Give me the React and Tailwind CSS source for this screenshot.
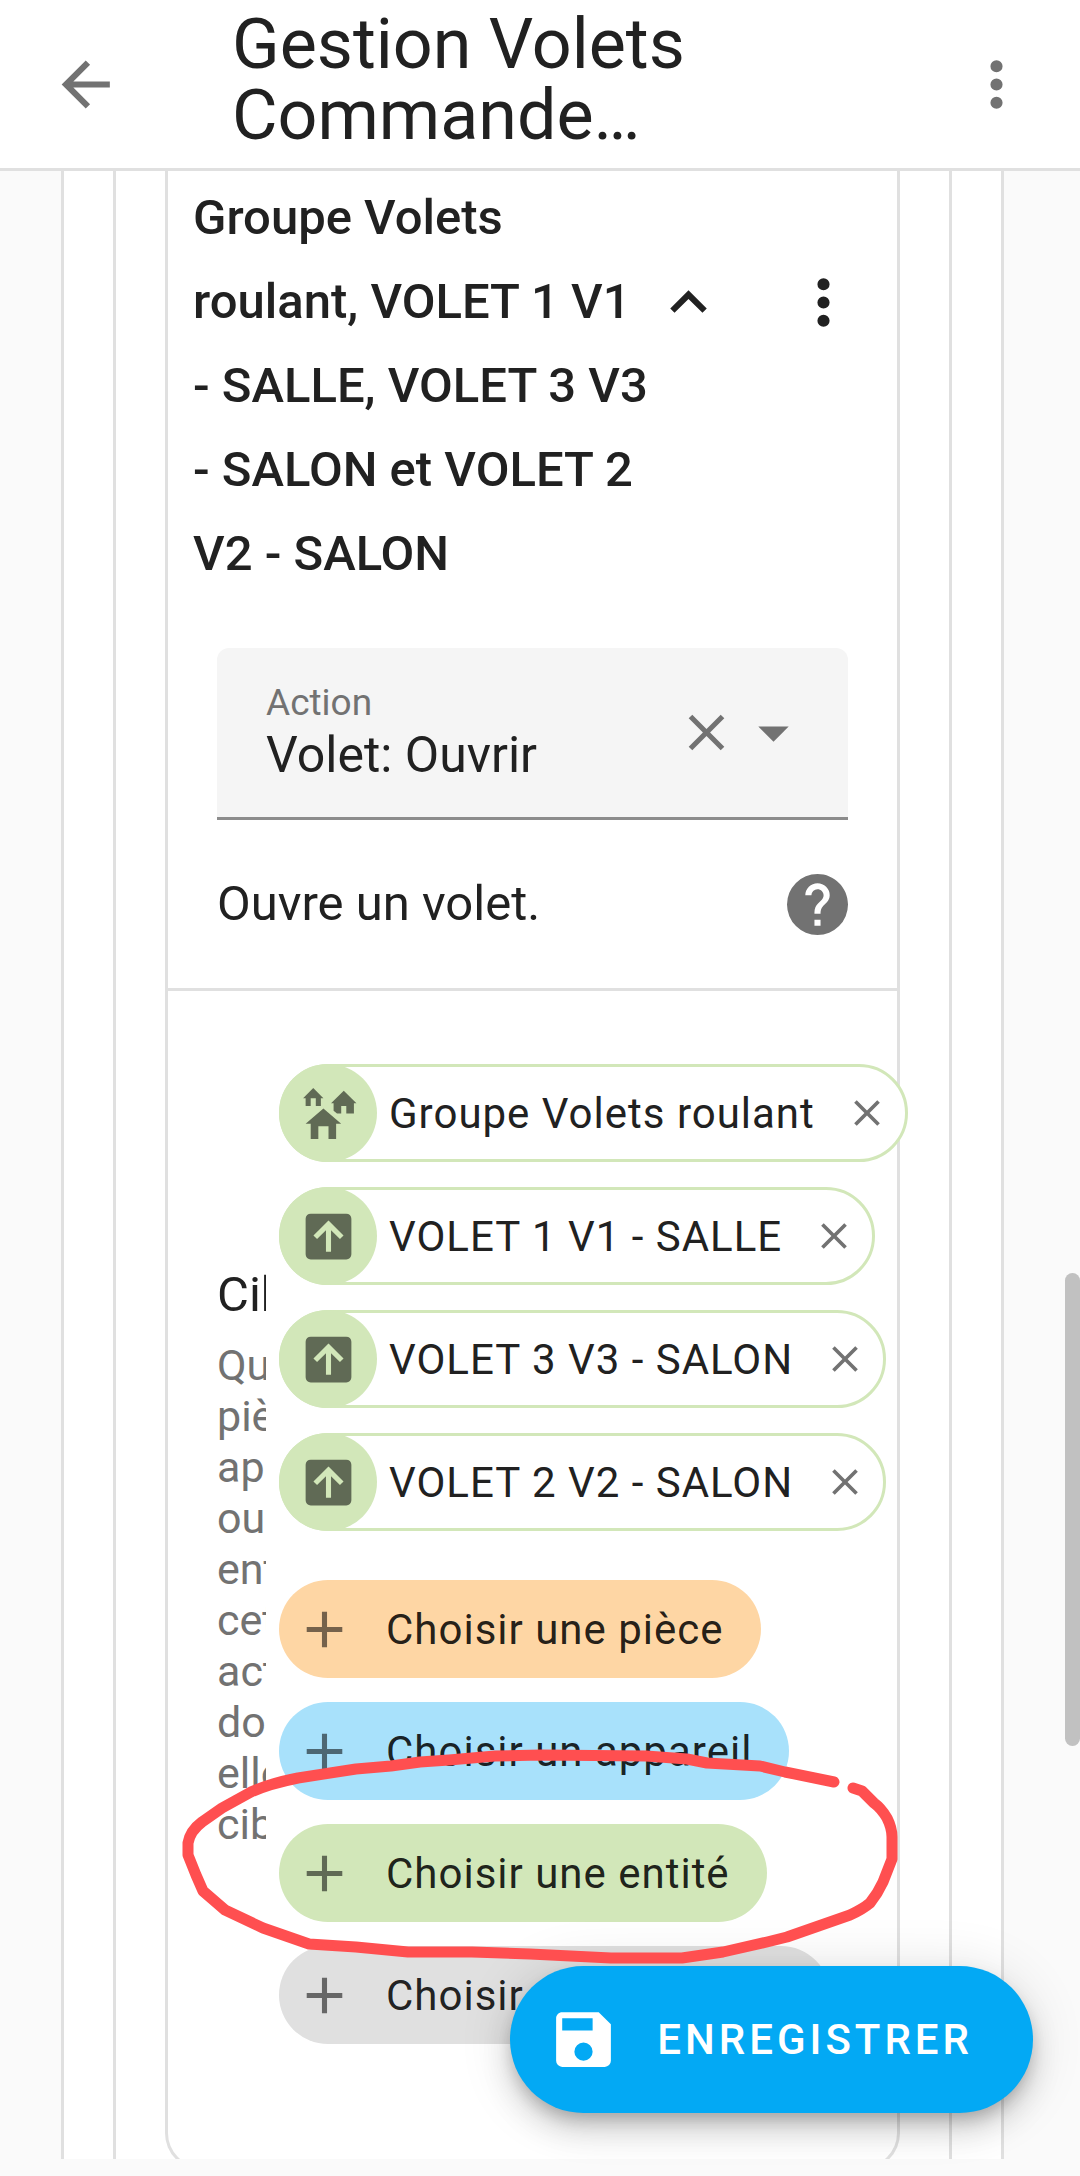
import React from 'react';

const icons = {
  arrowLeft: 'M20,11V13H8L13.5,18.5L12.08,19.92L4.16,12L12.08,4.08L13.5,5.5L8,11H20Z',
  dots: 'M12,16A2,2 0 0,1 14,18A2,2 0 0,1 12,20A2,2 0 0,1 10,18A2,2 0 0,1 12,16M12,10A2,2 0 0,1 14,12A2,2 0 0,1 12,14A2,2 0 0,1 10,12A2,2 0 0,1 12,10M12,4A2,2 0 0,1 14,6A2,2 0 0,1 12,8A2,2 0 0,1 10,6A2,2 0 0,1 12,4Z',
  chevronUp: 'M7.41,15.41L12,10.83L16.59,15.41L18,14L12,8L6,14L7.41,15.41Z',
  close: 'M19,6.41L17.59,5L12,10.59L6.41,5L5,6.41L10.59,12L5,17.59L6.41,19L12,13.41L17.59,19L19,17.59L13.41,12L19,6.41Z',
  menuDown: 'M7,10L12,15L17,10H7Z',
  help: 'M15.07,11.25L14.17,12.17C13.45,12.89 13,13.5 13,15H11V14.5C11,13.39 11.45,12.39 12.17,11.67L13.41,10.41C13.78,10.05 14,9.55 14,9C14,7.89 13.1,7 12,7A2,2 0 0,0 10,9H8A4,4 0 0,1 12,5A4,4 0 0,1 16,9C16,9.88 15.64,10.67 15.07,11.25M13,19H11V17H13M12,2A10,10 0 0,0 2,12A10,10 0 0,0 12,22A10,10 0 0,0 22,12C22,6.47 17.5,2 12,2Z',
  homeGroup: 'M17,16H15V22H12V17H8V22H5V16H3L10,10L17,16M6,2L10,6H9V9H7V6H5V9H3V6H2L6,2M18,3L23,8H22V12H19V9H17V12H15.34L14,10.87V8H13L18,3Z',
  arrowUpBox: 'M19,21H5A2,2 0 0,1 3,19V5A2,2 0 0,1 5,3H19A2,2 0 0,1 21,5V19A2,2 0 0,1 19,21M13,18V9.5L16.5,13L17.92,11.58L12,5.66L6.08,11.58L7.5,13L11,9.5V18H13Z',
  plus: 'M19,13H13V19H11V13H5V11H11V5H13V11H19V13Z',
  save: 'M15,9H5V5H15M12,19A3,3 0 0,1 9,16A3,3 0 0,1 12,13A3,3 0 0,1 15,16A3,3 0 0,1 12,19M17,3H5C3.89,3 3,3.9 3,5V19A2,2 0 0,0 5,21H19A2,2 0 0,0 21,19V7L17,3Z',
};

function Icon({ name, className, viewBox = '0 0 24 24' }) {
  return (
    <svg viewBox={viewBox} className={`shrink-0 fill-current ${className}`} aria-hidden="true">
      <path d={icons[name]} />
    </svg>
  );
}

const targets = [
  { icon: 'homeGroup', label: 'Groupe Volets roulant' },
  { icon: 'arrowUpBox', label: 'VOLET 1 V1 - SALLE' },
  { icon: 'arrowUpBox', label: 'VOLET 3 V3 - SALON' },
  { icon: 'arrowUpBox', label: 'VOLET 2 V2 - SALON' },
];

const pickers = [
  { label: 'Choisir une pièce', color: 'bg-[#fed6a4]' },
  { label: 'Choisir un appareil', color: 'bg-[#a8e1fb]' },
  { label: 'Choisir une entité', color: 'bg-[#d2e7b9]' },
  { label: 'Choisir une étiquette', color: 'bg-[#e0e0e0]' },
];

function TargetChip({ icon, label }) {
  return (
    <li className="flex h-[98px] items-center rounded-full border-[3px] border-[#d2e7b9] bg-white pr-4">
      <span className="-my-[3px] -ml-[3px] flex size-[98px] shrink-0 items-center justify-center rounded-full bg-[#d2e7b9] text-black/54">
        <Icon name={icon} className="size-[61px]" />
      </span>
      <span className="pl-3 text-[42px] tracking-[1px]">{label}</span>
      <button type="button" aria-label={`Retirer ${label}`} className="ml-[30px] text-[#727272]">
        <Icon name="close" className="size-[44px]" />
      </button>
    </li>
  );
}

function Header() {
  return (
    <header className="flex h-[171px] shrink-0 items-center border-b-[3px] border-[#e0e0e0] bg-white">
      <button type="button" aria-label="Retour" className="ml-[49px] text-[#727272]">
        <Icon name="arrowLeft" className="size-[73px]" />
      </button>
      <h1 className="ml-[110px] flex-1 pb-2 text-[70px] leading-[71px]">
        Gestion Volets
        <br />
        Commande…
      </h1>
      <button type="button" aria-label="Menu" className="mr-[47px] text-[#727272]">
        <Icon name="dots" className="size-[73px]" />
      </button>
    </header>
  );
}

function ActionField() {
  return (
    <div className="mx-[49px] mt-[52px] flex h-[172px] items-center rounded-t-xl border-b-[3px] border-[#8c8c8c] bg-[#f5f5f5] pr-[38px] pl-[49px] text-[#727272]">
      <div className="flex min-w-0 flex-1 flex-col">
        <label htmlFor="action" className="text-[37px] leading-[44px]">Action</label>
        <select id="action" className="h-[60px] w-full appearance-none bg-transparent text-[50px] leading-[60px] text-[#212121] outline-none">
          <option>Volet: Ouvrir</option>
        </select>
      </div>
      <button type="button" aria-label="Effacer">
        <Icon name="close" className="size-[61px]" />
      </button>
      <Icon name="menuDown" className="size-[73px]" />
    </div>
  );
}

function TargetRow() {
  return (
    <section className="flex items-center gap-[13px] border-t-[3px] border-[#e0e0e0] pt-[73px] pb-[123px] pl-[49px]">
      <div className="w-[49px] shrink-0 overflow-hidden">
        <h3 className="text-[49px] leading-[74px]">Cible</h3>
        <p className="mt-2 text-[43px] leading-[51px] text-[#727272]">
          Quels pièces, appareils ou entités cette action doit-elle cibler
        </p>
      </div>
      <div className="flex min-w-0 flex-1 flex-col gap-[49px] whitespace-nowrap">
        <ul className="flex flex-col items-start gap-[25px]">
          {targets.map((t) => (
            <TargetChip key={t.label} icon={t.icon} label={t.label} />
          ))}
        </ul>
        <div className="flex flex-col items-start gap-6">
          {pickers.map((p) => (
            <button key={p.label} type="button" className={`flex h-[98px] items-center rounded-full pr-[37px] pl-[15px] ${p.color}`}>
              <Icon name="plus" className="size-[61px] text-black/54" />
              <span className="pl-[31px] text-[42px] tracking-[1px] text-black/87">{p.label}</span>
            </button>
          ))}
        </div>
      </div>
    </section>
  );
}

// Hand-drawn loop around the entity picker
function Marker() {
  return (
    <svg
      viewBox="180 1740 730 230"
      className="pointer-events-none absolute top-[1740px] left-[180px] h-[230px] w-[730px] fill-none stroke-[#ff4f50]"
      strokeWidth="11"
      strokeLinecap="round"
      strokeLinejoin="round"
      aria-hidden="true"
    >
      <path d="M834 1782L785 1772L760 1766L707 1763L687 1759L646 1756L541 1755L495 1756L449 1760L420 1762L391 1766L356 1769L298 1778Q268 1784 251 1792L222 1808L202 1822Q190 1831 188 1843L188 1855L196 1875L203 1891L225 1910L263 1928L309 1944L356 1947L408 1952L472 1952L530 1954L611 1958L682 1958L723 1952L767 1942L787 1937L850 1915Q863 1909 870 1903Q878 1893 883 1882L892 1859V1837Q892 1828 887 1818Q881 1808 874 1803L862 1791L853 1788" />
    </svg>
  );
}

export default function App() {
  return (
    <div className="relative flex h-screen flex-col overflow-hidden bg-[#fafafa] pb-[17px] font-['Roboto',sans-serif] text-[#212121]">
      <Header />
      <main className="flex min-h-0 flex-1 flex-col overflow-hidden pr-[76px] pl-[61px]">
        <div className="border-x-[3px] border-[#e0e0e0] bg-white px-[49px]">
          <div className="border-x-[3px] border-[#e0e0e0] px-[49px]">
            <article className="rounded-b-[37px] border-x-[3px] border-b-[3px] border-[#e0e0e0]">
              <div className="flex items-start pt-[5px] pr-[37px] pl-[25px]">
                <h2 className="min-w-0 flex-1 text-[49px] leading-[84px] font-medium">
                  Groupe Volets roulant, VOLET 1 V1 - SALLE, VOLET 3 V3 - SALON et VOLET 2 V2 - SALON
                </h2>
                <button type="button" aria-label="Réduire" className="mt-[90px]">
                  <Icon name="chevronUp" className="size-[73px]" />
                </button>
                <button type="button" aria-label="Options" className="mt-[90px] ml-[62px]">
                  <Icon name="dots" className="size-[73px]" />
                </button>
              </div>
              <ActionField />
              <div className="flex h-[168px] items-center justify-between px-[49px]">
                <p className="text-[49px] leading-[74px]">Ouvre un volet.</p>
                <a href="#aide" aria-label="Aide" className="text-[#727272]">
                  <Icon name="help" viewBox="2 2 20 20" className="size-[61px]" />
                </a>
              </div>
              <TargetRow />
            </article>
          </div>
        </div>
      </main>
      <div className="absolute top-[1273px] right-0 h-[473px] w-[15px] rounded-full bg-[#c1c1c1]" />
      <button
        type="button"
        className="absolute right-[47px] bottom-[63px] flex h-[147px] items-center gap-[37px] rounded-full bg-[#03a9f4] pr-[60px] pl-[37px] text-[42px] font-medium tracking-[4px] text-white shadow-[0_9px_15px_-3px_rgba(0,0,0,0.2),0_18px_31px_0_rgba(0,0,0,0.14),0_3px_55px_0_rgba(0,0,0,0.12)]"
      >
        <Icon name="save" className="size-[73px]" />
        ENREGISTRER
      </button>
      <Marker />
    </div>
  );
}
